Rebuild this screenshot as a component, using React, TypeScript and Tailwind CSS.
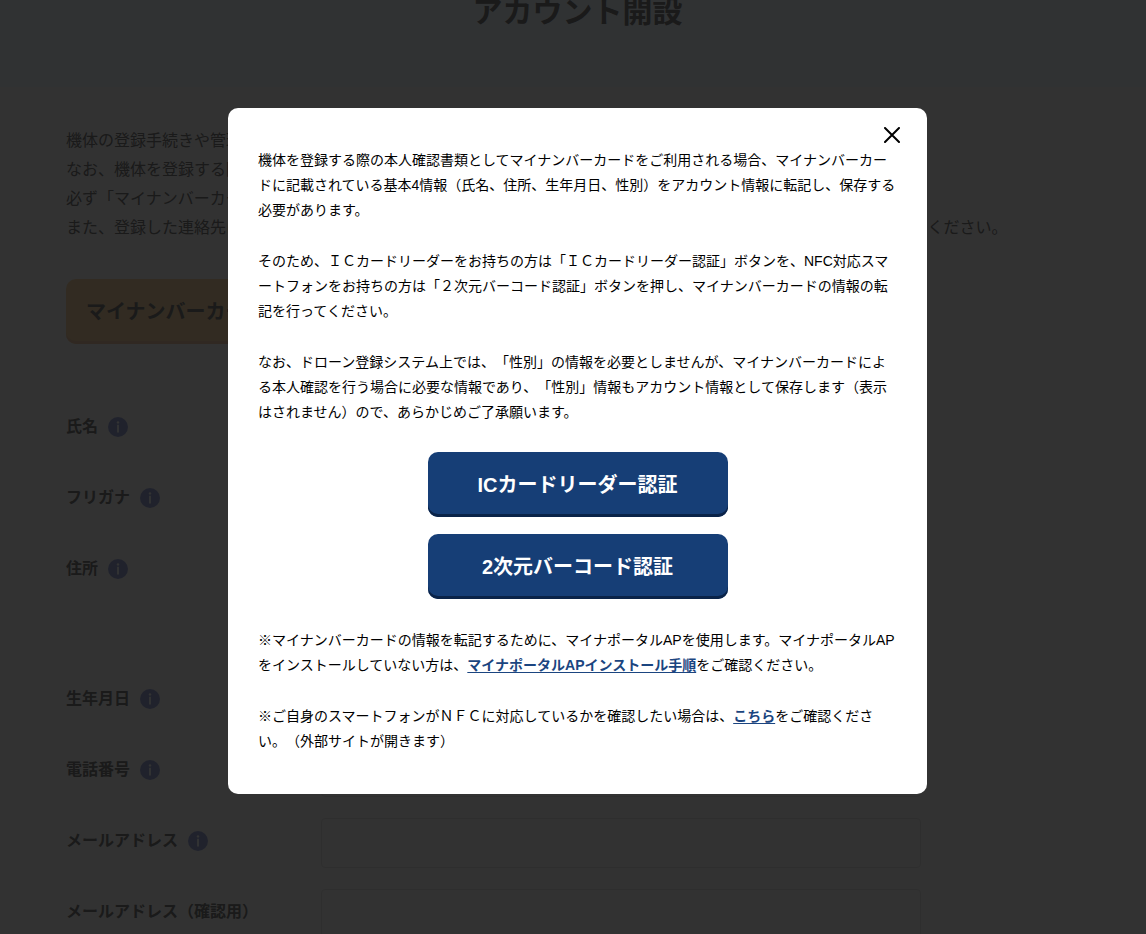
import { useId } from "react";
import type { ReactNode } from "react";

function InfoIcon() {
  return (
    <svg viewBox="0 0 20 20" className="size-5 shrink-0" aria-hidden="true">
      <circle cx="10" cy="10" r="10" fill="#a0acdc" />
      <circle cx="10" cy="5.4" r="1.2" fill="#ffffff" />
      <path d="M10 7.8v7.6" stroke="#ffffff" strokeWidth="1.8" />
    </svg>
  );
}

type FieldProps = { label: string; info?: boolean; lines?: number };

function Field({ label, info = true, lines = 1 }: FieldProps) {
  const id = useId();
  return (
    <div className="flex items-start">
      <div className="flex h-[46px] w-[255px] shrink-0 items-center gap-[10px]">
        <label htmlFor={id} className="text-base font-bold">
          {label}
        </label>
        {info && (
          <button type="button" aria-label={`${label}の説明`}>
            <InfoIcon />
          </button>
        )}
      </div>
      <div className="flex max-w-[600px] grow flex-col gap-[9px]">
        {Array.from({ length: lines }, (_, i) => (
          <input
            key={i}
            id={i === 0 ? id : undefined}
            aria-label={i === 0 ? undefined : label}
            type="text"
            className="h-[50px] w-full rounded border border-[#e6e6e6] bg-[#f8f8f8] px-4"
          />
        ))}
      </div>
    </div>
  );
}

function PrimaryButton({ children }: { children: ReactNode }) {
  return (
    <button
      type="button"
      className="h-[65px] w-[300px] rounded-[10px] bg-[#163e76] text-xl font-bold text-white shadow-[inset_0_-3px_0_#0a2348]"
    >
      {children}
    </button>
  );
}

function InlineLink({ children }: { children: ReactNode }) {
  return (
    <a href="#" className="font-bold text-[#1b4580] underline underline-offset-2">
      {children}
    </a>
  );
}

function AccountPage() {
  return (
    <div className="h-full bg-[#fafafa] text-[#808080]">
      <header className="flex h-[87px] justify-center bg-[#f0f8ff] pl-[9px]">
        <h1 className="-mt-1 text-[30px] leading-8 font-bold">アカウント開設</h1>
      </header>
      <main className="px-[66px] pt-[39px]">
        <p className="text-base leading-[29px] whitespace-nowrap">
          機体の登録手続きや管理を行うために、アカウントを開設してください。
          <br />
          なお、機体を登録する際にマイナンバーカードを利用される場合は、
          <br />
          必ず「マイナンバーカードの情報を転記」ボタンを押してください。
          <br />
          また、登録した連絡先に変更があった場合は、アカウント情報の変更手続きが必要となりますので、必ず手続きを行ってください。
        </p>
        <button
          type="button"
          className="mt-[37px] h-[65px] rounded-[10px] bg-[#f8d8a8] px-5 text-xl font-bold shadow-[inset_0_-3px_0_#f0c8a8]"
        >
          マイナンバーカードの情報を転記
        </button>
        <form className="mt-[60px] flex flex-col gap-[21px]">
          <Field label="氏名" />
          <Field label="フリガナ" />
          <Field label="住所" lines={2} />
          <Field label="生年月日" />
          <Field label="電話番号" />
          <Field label="メールアドレス" />
          <Field label="メールアドレス（確認用）" info={false} />
        </form>
      </main>
    </div>
  );
}

function CardDialog() {
  return (
    <div className="fixed inset-0 flex items-start justify-center overflow-hidden bg-black/80 pt-[108px] pl-[9px]">
      <section
        role="dialog"
        aria-modal="true"
        className="relative w-full max-w-[699px] rounded-[10px] bg-white px-[30px] py-10 text-sm leading-[25px] whitespace-nowrap text-black"
      >
        <button type="button" aria-label="閉じる" className="absolute top-[15px] right-[23px] p-1">
          <svg viewBox="0 0 16 16" className="size-4" aria-hidden="true">
            <path d="M1 1l14 14M15 1L1 15" stroke="#000" strokeWidth="2" strokeLinecap="round" />
          </svg>
        </button>
        <div className="flex flex-col gap-[26px]">
          <p>
            機体を登録する際の本人確認書類としてマイナンバーカードをご利用される場合、マイナンバーカー
            <br />
            ドに記載されている基本4情報（氏名、住所、生年月日、性別）をアカウント情報に転記し、保存する
            <br />
            必要があります。
          </p>
          <p>
            そのため、ＩＣカードリーダーをお持ちの方は「ＩＣカードリーダー認証」ボタンを、NFC対応スマ
            <br />
            ートフォンをお持ちの方は「２次元バーコード認証」ボタンを押し、マイナンバーカードの情報の転
            <br />
            記を行ってください。
          </p>
          <p>
            なお、ドローン登録システム上では、「性別」の情報を必要としませんが、マイナンバーカードによ
            <br />
            る本人確認を行う場合に必要な情報であり、「性別」情報もアカウント情報として保存します（表示
            <br />
            はされません）ので、あらかじめご了承願います。
          </p>
        </div>
        <div className="mt-[27px] mb-[29px] flex flex-col items-center gap-[17px]">
          <PrimaryButton>ICカードリーダー認証</PrimaryButton>
          <PrimaryButton>2次元バーコード認証</PrimaryButton>
        </div>
        <div className="flex flex-col gap-[26px]">
          <p>
            ※マイナンバーカードの情報を転記するために、マイナポータルAPを使用します。マイナポータルAP
            <br />
            をインストールしていない方は、<InlineLink>マイナポータルAPインストール手順</InlineLink>をご確認ください。
          </p>
          <p>
            ※ご自身のスマートフォンがＮＦＣに対応しているかを確認したい場合は、<InlineLink>こちら</InlineLink>をご確認くださ
            <br />
            い。（外部サイトが開きます）
          </p>
        </div>
      </section>
    </div>
  );
}

export default function App() {
  return (
    <div
      lang="ja"
      className="relative h-screen overflow-hidden font-['Liberation_Sans','Noto_Sans_CJK_JP',sans-serif] [text-spacing-trim:space-all]"
    >
      <AccountPage />
      <CardDialog />
    </div>
  );
}
